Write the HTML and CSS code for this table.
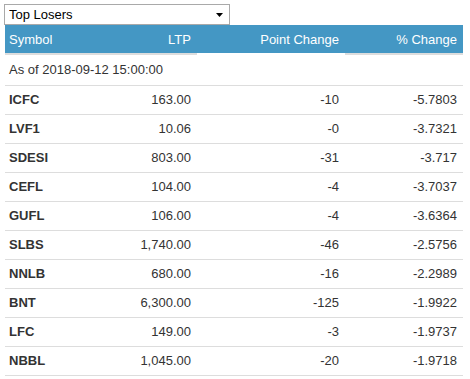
FILE: index.html
```html
<!DOCTYPE html>
<html>
<head>
<meta charset="utf-8">
<link rel="stylesheet" href="styles.css">
</head>
<body>
<div class="wrap">
  <div class="picker">
    <select class="select">
      <option>Top Losers</option>
      <option>Top Gainers</option>
    </select>
    <svg class="caret" width="7" height="4" viewBox="0 0 7 4"><path d="M0 0H7L3.5 4Z" fill="#000"/></svg>
  </div>
  <table class="grid">
    <colgroup>
      <col class="c1"><col class="c2"><col class="c3"><col class="c4">
    </colgroup>
    <thead>
      <tr>
        <th class="left">Symbol</th>
        <th class="right">LTP</th>
        <th class="right nob">Point Change</th>
        <th class="right">% Change</th>
      </tr>
    </thead>
    <tbody>
      <tr class="asof"><td colspan="4" class="left">As of 2018-09-12 15:00:00</td></tr>
      <tr><td class="sym">ICFC</td><td class="right">163.00</td><td class="right">-10</td><td class="right">-5.7803</td></tr>
      <tr><td class="sym">LVF1</td><td class="right">10.06</td><td class="right">-0</td><td class="right">-3.7321</td></tr>
      <tr><td class="sym">SDESI</td><td class="right">803.00</td><td class="right">-31</td><td class="right">-3.717</td></tr>
      <tr><td class="sym">CEFL</td><td class="right">104.00</td><td class="right">-4</td><td class="right">-3.7037</td></tr>
      <tr><td class="sym">GUFL</td><td class="right">106.00</td><td class="right">-4</td><td class="right">-3.6364</td></tr>
      <tr><td class="sym">SLBS</td><td class="right">1,740.00</td><td class="right">-46</td><td class="right">-2.5756</td></tr>
      <tr><td class="sym">NNLB</td><td class="right">680.00</td><td class="right">-16</td><td class="right">-2.2989</td></tr>
      <tr><td class="sym">BNT</td><td class="right">6,300.00</td><td class="right">-125</td><td class="right">-1.9922</td></tr>
      <tr><td class="sym">LFC</td><td class="right">149.00</td><td class="right">-3</td><td class="right">-1.9737</td></tr>
      <tr><td class="sym">NBBL</td><td class="right">1,045.00</td><td class="right">-20</td><td class="right">-1.9718</td></tr>
    </tbody>
  </table>
</div>
</body>
</html>
```
FILE: styles.css
```css
* { box-sizing: border-box; }
html, body { margin: 0; padding: 0; background: #fff; }
body { font-family: "Liberation Sans", Arial, sans-serif; color: #333; }
.wrap { padding: 4px 0 0 4px; }
.picker { position: relative; width: 226px; height: 21px; }
.select {
  -webkit-appearance: none; appearance: none;
  width: 226px; height: 21px; margin: 0;
  border: 1px solid #a9a9a9; border-radius: 0;
  background: #fff; color: #000;
  font-family: "Liberation Sans", Arial, sans-serif; font-size: 13px;
  padding: 0 0 0 4px; line-height: 19px;
}
.caret { position: absolute; right: 7px; top: 9px; }
.grid {
  margin-left: 1px;
  width: 458px; table-layout: fixed;
  border-collapse: collapse; border-spacing: 0;
  font-size: 13px;
}
.c1 { width: 110px; } .c2 { width: 82px; } .c3 { width: 148px; } .c4 { width: 118px; }
.grid th {
  background: #4497c4; color: #fff; font-weight: normal; font-size: 13px;
  height: 29px; padding: 0 6px 0 4px; border-bottom: 2px solid #ddd;
}
.grid th.nob { border-bottom-color: #fff; }
.grid td { height: 29px; padding: 0 6px 0 4px; border-bottom: 1px solid #ddd; }
.grid tr.asof td { height: 31px; }
.left { text-align: left; }
.right { text-align: right; }
.sym { font-weight: bold; }
```
